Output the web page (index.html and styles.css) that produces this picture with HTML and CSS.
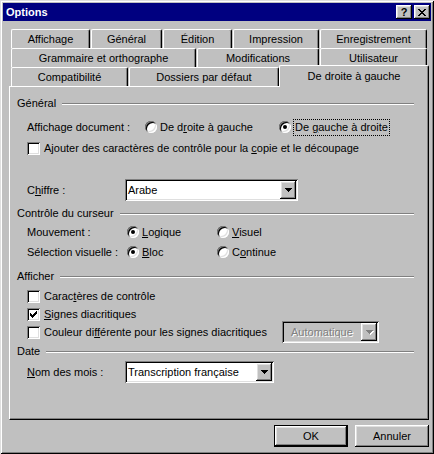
FILE: index.html
```html
<!DOCTYPE html>
<html lang="fr">
<head>
<meta charset="utf-8">
<title>Options</title>
<link rel="stylesheet" href="styles.css">
</head>
<body>
<div class="window">
  <div class="titlebar">
    <span class="title">Options</span>
    <div class="tb-buttons">
      <span class="tb-btn help">?</span>
      <span class="tb-btn close"><svg width="8" height="7" viewBox="0 0 8 7"><path d="M0 0h2v1h-2z M6 0h2v1h-2z M1 1h2v1h-2z M5 1h2v1h-2z M2 2h4v1h-4z M3 3h2v1h-2z M2 4h4v1h-4z M1 5h2v1h-2z M5 5h2v1h-2z M0 6h2v1h-2z M6 6h2v1h-2z" fill="#000"/></svg></span>
    </div>
  </div>
  <div class="client">
    <div class="tabs">
      <div class="tab-row">
        <div class="tab tab-affichage">Affichage</div>
        <div class="tab tab-general">Général</div>
        <div class="tab tab-edition">Édition</div>
        <div class="tab tab-impression">Impression</div>
        <div class="tab tab-enreg">Enregistrement</div>
      </div>
      <div class="tab-row">
        <div class="tab tab-grammaire">Grammaire et orthographe</div>
        <div class="tab tab-modifs">Modifications</div>
        <div class="tab tab-user">Utilisateur</div>
      </div>
      <div class="tab-row">
        <div class="tab tab-compat">Compatibilité</div>
        <div class="tab tab-dossiers flush">Dossiers par défaut</div>
        <div class="tab tab-rtl selected">De droite à gauche</div>
      </div>
    </div>
    <div class="panel">
      <div class="grp"><span class="grp-title">Général</span><span class="grp-line"></span></div>
      <div class="row mt8">
        <span class="lbl lbl-doc">Affichage document :</span>
        <span class="opt opt-doc"><span class="radio"></span><span class="opt-text">De d<u>r</u>oite à gauche</span></span>
        <span class="opt"><span class="radio on"></span><span class="opt-text focus">De <u>g</u>auche à droite</span></span>
      </div>
      <div class="row mt5">
        <span class="check"></span><span class="check-text">Ajouter des caractères de contrôle pour la <u>c</u>opie et le découpage</span>
      </div>
      <div class="row tall mt23">
        <span class="lbl lbl-combo">C<u>h</u>iffre :</span>
        <div class="combo combo-chiffre">
          <span class="combo-text">Arabe</span>
          <span class="combo-btn"><svg width="7" height="4" viewBox="0 0 7 4"><path d="M0 0H7V1H6V2H5V3H4V4H3V3H2V2H1V1H0Z" fill="#000"/></svg></span>
        </div>
      </div>
      <div class="grp mt4"><span class="grp-title">Contrôle du curseur</span><span class="grp-line"></span></div>
      <div class="row mt3">
        <span class="lbl lbl-mv">Mouvement :</span>
        <span class="opt opt-mv"><span class="radio on"></span><span class="opt-text"><u>L</u>ogique</span></span>
        <span class="opt"><span class="radio"></span><span class="opt-text"><u>V</u>isuel</span></span>
      </div>
      <div class="row mt4">
        <span class="lbl lbl-mv">Sélection visuelle :</span>
        <span class="opt opt-mv"><span class="radio on"></span><span class="opt-text"><u>B</u>loc</span></span>
        <span class="opt"><span class="radio"></span><span class="opt-text">C<u>o</u>ntinue</span></span>
      </div>
      <div class="grp mt8"><span class="grp-title">Afficher</span><span class="grp-line"></span></div>
      <div class="row mt4">
        <span class="check"></span><span class="check-text">Carac<u>t</u>ères de contrôle</span>
      </div>
      <div class="row short mt3">
        <span class="check"><svg width="7" height="7" viewBox="0 0 7 7"><path d="M0 2H1V3H2V4H3V3H4V2H5V1H6V0H7V3H6V4H5V5H4V6H3V7H2V6H1V5H0Z" fill="#000"/></svg></span><span class="check-text"><u>S</u>ignes diacritiques</span>
      </div>
      <div class="row tall">
        <span class="check-wide"><span class="check"></span><span class="check-text">Couleur di<u>ff</u>érente pour les signes diacritiques</span></span>
        <div class="combo combo-auto disabled">
          <span class="combo-text">Automatique</span>
          <span class="combo-btn"><svg width="7" height="4" viewBox="0 0 7 4"><path d="M0 0H7V1H6V2H5V3H4V4H3V3H2V2H1V1H0Z" fill="#808080"/></svg></span>
        </div>
      </div>
      <div class="grp"><span class="grp-title">Date</span><span class="grp-line"></span></div>
      <div class="row tall mt2">
        <span class="lbl lbl-combo"><u>N</u>om des mois :</span>
        <div class="combo combo-mois">
          <span class="combo-text">Transcription française</span>
          <span class="combo-btn"><svg width="7" height="4" viewBox="0 0 7 4"><path d="M0 0H7V1H6V2H5V3H4V4H3V3H2V2H1V1H0Z" fill="#000"/></svg></span>
        </div>
      </div>
    </div>
    <div class="actions">
      <button class="btn default" type="button">OK</button>
      <button class="btn" type="button">Annuler</button>
    </div>
  </div>
</div>
</body>
</html>
```

FILE: styles.css
```css
* { box-sizing: border-box; }
html, body { margin: 0; padding: 0; }
body {
  font-family: "Liberation Sans", Arial, sans-serif;
  font-size: 11px;
  color: #000;
  background: #c0c0c0;
}
u { text-decoration: underline; text-underline-offset: 1px; }

.window {
  width: 434px;
  height: 454px;
  padding: 3px;
  background: #c0c0c0;
  box-shadow: inset 1px 1px 0 #dfdfdf, inset -1px -1px 0 #000, inset 2px 2px 0 #fff, inset -2px -2px 0 #808080;
}

.titlebar {
  height: 18px;
  background: #000080;
  color: #fff;
  display: flex;
  align-items: center;
  justify-content: space-between;
  padding: 0 1px 0 3px;
}
.title { font-weight: bold; font-size: 11px; }
.tb-buttons { display: flex; gap: 2px; }
.tb-btn {
  width: 16px;
  height: 14px;
  background: #c0c0c0;
  color: #000;
  font-weight: bold;
  font-size: 11px;
  line-height: 14px;
  display: flex;
  align-items: center;
  justify-content: center;
  box-shadow: inset -1px -1px 0 #000, inset 1px 1px 0 #fff, inset -2px -2px 0 #808080, inset 2px 2px 0 #dfdfdf;
}
.tb-btn svg { display: block; }

.client { padding: 0; }

.tabs { margin: 8px 0 0 8px; }
.tab-row { display: flex; height: 19px; align-items: flex-start; }
.tab {
  height: 19px;
  margin-right: 1px;
  background: #c0c0c0;
  border-left: 1px solid #fff;
  border-top: 1px solid #fff;
  border-right: 1px solid #000;
  border-radius: 2px 2px 0 0;
  box-shadow: inset -1px 0 0 #808080;
  display: flex;
  align-items: center;
  justify-content: center;
  white-space: nowrap;
  line-height: 13px;
}
.tab:last-child, .tab.flush { margin-right: 0; }
.tab.selected {
  height: 22px;
  margin-top: -2px;
  padding-bottom: 1px;
  position: relative;
  z-index: 1;
}
.tab-affichage { width: 79px; }
.tab-general { width: 71px; }
.tab-edition { width: 69px; }
.tab-impression { width: 86px; }
.tab-enreg { width: 107px; }
.tab-grammaire { width: 185px; }
.tab-modifs { width: 122px; }
.tab-user { width: 107px; }
.tab-compat { width: 117px; }
.tab-dossiers { width: 150px; }
.tab-rtl { width: 150px; }

.panel {
  width: 420px;
  height: 334px;
  margin-left: 6px;
  border-left: 1px solid #fff;
  border-top: 1px solid #fff;
  border-right: 1px solid #000;
  border-bottom: 1px solid #000;
  box-shadow: inset -1px -1px 0 #808080;
  padding: 8px 14px 0 7px;
}

.grp { display: flex; align-items: center; height: 16px; }
.grp-title { white-space: nowrap; }
.grp-line {
  flex: 1;
  height: 2px;
  margin: 1px 0 0 6px;
  border-top: 1px solid #808080;
  border-bottom: 1px solid #fff;
}

.row { display: flex; align-items: center; height: 16px; margin-left: 10px; white-space: nowrap; }
.row.tall { height: 22px; }
.row.short { height: 14px; }
.mt2 { margin-top: 2px; }
.mt3 { margin-top: 3px; }
.mt4 { margin-top: 4px; }
.mt5 { margin-top: 5px; }
.mt8 { margin-top: 8px; }
.mt23 { margin-top: 23px; }

.lbl { flex: none; }
.lbl-doc { width: 118px; }
.lbl-mv { width: 100px; }
.lbl-combo { width: 98px; }

.opt { display: flex; align-items: center; flex: none; }
.opt-doc { width: 134px; }
.opt-mv { width: 90px; }
.opt-text { margin-left: 3px; }
.opt-text.focus {
  margin-left: 2px;
  padding: 0 1px;
  line-height: 15px;
  border: 1px dotted #000;
}

.radio {
  flex: none;
  position: relative;
  width: 12px;
  height: 12px;
  border-radius: 50%;
  background: #fff;
  box-shadow: inset 1px 1px 0 #808080, inset -1px -1px 0 #fff, inset 2px 2px 0 #000, inset -2px -2px 0 #dfdfdf;
}
.radio.on::after {
  content: "";
  position: absolute;
  left: 4px;
  top: 4px;
  width: 4px;
  height: 4px;
  border-radius: 50%;
  background: #000;
}

.check {
  flex: none;
  width: 13px;
  height: 13px;
  background: #fff;
  display: flex;
  align-items: center;
  justify-content: center;
  box-shadow: inset 1px 1px 0 #808080, inset -1px -1px 0 #fff, inset 2px 2px 0 #000, inset -2px -2px 0 #dfdfdf;
}
.check svg { display: block; }
.check-text { margin-left: 4px; }
.check-wide { display: flex; align-items: center; width: 255px; flex: none; }

.combo {
  height: 22px;
  flex: none;
  background: #fff;
  padding: 2px;
  display: flex;
  align-items: center;
  box-shadow: inset 1px 1px 0 #808080, inset -1px -1px 0 #fff, inset 2px 2px 0 #000, inset -2px -2px 0 #dfdfdf;
}
.combo-text { flex: 1; padding-left: 1px; white-space: nowrap; overflow: hidden; }
.combo-btn {
  flex: none;
  width: 16px;
  height: 18px;
  background: #c0c0c0;
  display: flex;
  align-items: center;
  justify-content: center;
  box-shadow: inset -1px -1px 0 #000, inset 1px 1px 0 #fff, inset -2px -2px 0 #808080, inset 2px 2px 0 #dfdfdf;
}
.combo-btn svg { display: block; }
.combo-chiffre { width: 173px; }
.combo-mois { width: 149px; }
.combo-auto { width: 97px; }
.combo.disabled { background: #c0c0c0; }
.combo.disabled .combo-text { color: #808080; text-shadow: 1px 1px 0 #fff; padding-left: 7px; }
.combo.disabled svg { filter: drop-shadow(1px 1px 0 #fff); }

.actions {
  display: flex;
  justify-content: flex-end;
  gap: 7px;
  width: 420px;
  margin: 5px 0 0 6px;
}
.btn {
  width: 74px;
  height: 22px;
  padding: 0;
  border: none;
  background: #c0c0c0;
  font-family: "Liberation Sans", Arial, sans-serif;
  font-size: 11px;
  color: #000;
  box-shadow: inset -1px -1px 0 #000, inset 1px 1px 0 #fff, inset -2px -2px 0 #808080, inset 2px 2px 0 #dfdfdf;
}
.btn.default {
  box-shadow: inset 0 0 0 1px #000, inset -2px -2px 0 #000, inset 2px 2px 0 #fff, inset -3px -3px 0 #808080, inset 3px 3px 0 #dfdfdf;
}
```
